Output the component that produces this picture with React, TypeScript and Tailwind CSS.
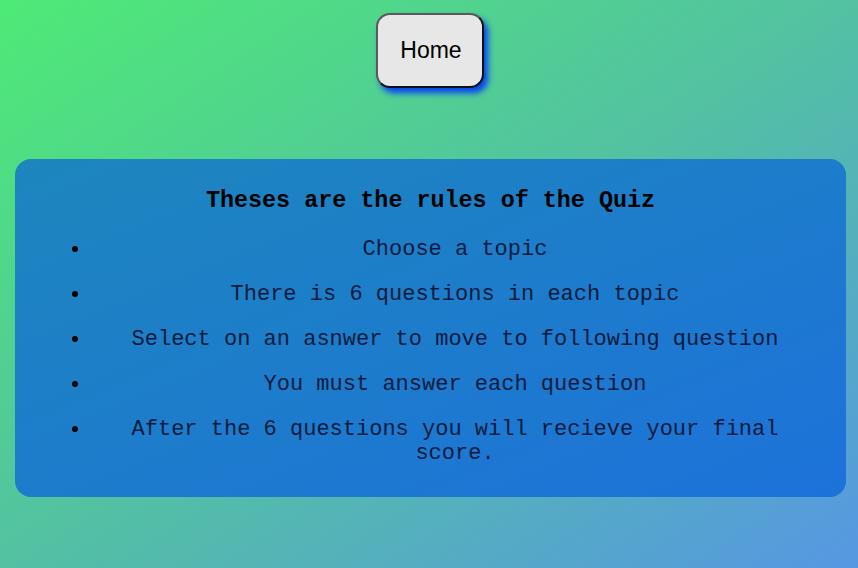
const rules = [
  "Choose a topic",
  "There is 6 questions in each topic",
  "Select on an asnwer to move to following question",
  "You must answer each question",
  "After the 6 questions you will recieve your final score.",
];

export default function App() {
  return (
    <div className="min-h-screen w-full bg-[linear-gradient(to_bottom_right,#4eea76,#53c1a2_50%,#5697e3)] pt-[13px] pb-10">
      <div className="flex justify-center pl-[2px]">
        <button className="w-[108px] h-[75px] rounded-[14px] border-2 border-t-[#5a5a5a] border-l-[#5a5a5a] border-b-[#111] border-r-[#111] bg-[#e6e7e6] pl-[2px] text-[23px] text-black font-['Liberation_Sans',Arial,sans-serif] shadow-[4px_5px_6px_#0540f5]">
          Home
        </button>
      </div>

      <div className="mt-[71px] ml-[15px] mr-[12px] rounded-[16px] bg-[linear-gradient(to_bottom_right,#1d86bd,#1d72da)] pt-[29px] pb-[31px] pl-[40px] pr-[31px] font-['Liberation_Mono','Courier_New',monospace]">
        <h3 className="-ml-[9px] text-center text-[23.4px] leading-[27px] font-bold text-black mb-[23px]">
          Theses are the rules of the Quiz
        </h3>
        <ul className="list-disc pl-[36px] text-[22px] leading-[24px] text-[#0b1b3e]">
          {rules.map((r) => (
            <li key={r} className="pl-[4px] text-center mb-[21px] last:mb-0 marker:text-black">
              {r}
            </li>
          ))}
        </ul>
      </div>
    </div>
  );
}
